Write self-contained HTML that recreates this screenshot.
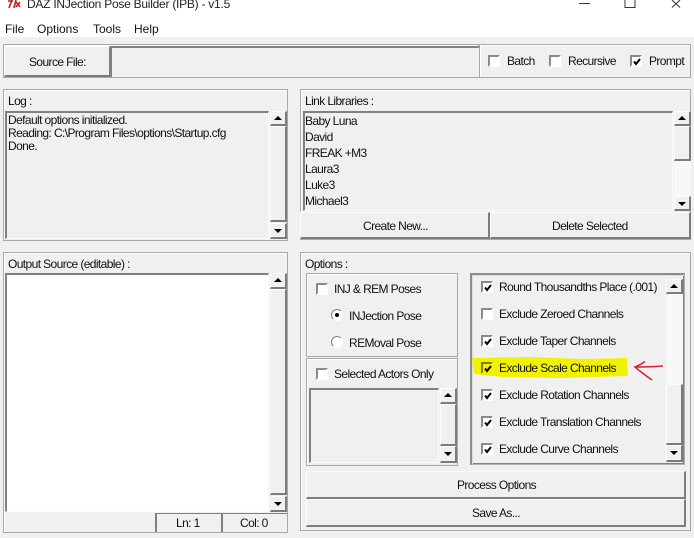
<!DOCTYPE html>
<html><head><meta charset="utf-8"><style>
html,body{margin:0;padding:0}
body{width:694px;height:538px;overflow:hidden;position:relative;background:#f0f0f0;font:12px "Liberation Sans",sans-serif;color:#111}
div,span,svg{position:absolute;box-sizing:border-box}
.t{white-space:nowrap;line-height:14px;height:14px;letter-spacing:-.6px}
.fr{border:1px solid #a8a8a8;background:#f0f0f0;box-shadow:inset 1px 1px 0 #fff}
.sk{border:1px solid #fbfbfb;border-top:2px solid #808080;border-left:2px solid #808080;background:#f0f0f0}
.rs{border-style:solid;border-width:1px 2px 2px 1px;border-color:#fcfcfc #7c7c7c #7c7c7c #fcfcfc;background:#f0f0f0;text-align:center}
.cb{width:12px;height:12px;background:#fff;border:2px solid #fff;border-top-color:#8a8a8a;border-left-color:#8a8a8a}
.cb svg{left:-1px;top:-1px}
.u:after,.d:after{content:"";position:absolute;left:3px;border:4px solid transparent}
.u:after{top:4px;border-top:0;border-bottom:4px solid #000}
.d:after{top:5px;border-bottom:0;border-top:4px solid #000}
.r{width:12px;height:12px;border-radius:50%;background:#fff;border:1px solid #fff;border-top-color:#808080;border-left-color:#808080}
</style></head><body>
<div style="left:0;top:0;width:694px;height:37px;background:#fff"></div>
<svg style="left:6px;top:0" width="16" height="9" viewBox="0 0 16 9"><path d="M2 1H7M6 0L3 8M10 0L8 8M10 2L14 7M14 2L10 7" stroke="#c02020" stroke-width="1.6" fill="none"/></svg>
<div class="t" style="left:27px;top:-3px;letter-spacing:-.25px;color:#222">DAZ INJection Pose Builder (IPB) - v1.5</div>
<svg style="left:570px;top:0" width="124" height="12"><path d="M9 3.5H20M55 0V7.5H65V0M102 0L110 7.5M110 0L102 7.5" stroke="#333" fill="none"/></svg>
<div class="t" style="left:5px;top:22px;letter-spacing:0">File</div>
<div class="t" style="left:37px;top:22px;letter-spacing:0">Options</div>
<div class="t" style="left:93px;top:22px;letter-spacing:0">Tools</div>
<div class="t" style="left:134px;top:22px;letter-spacing:0">Help</div>

<div class="fr" style="left:3px;top:44px;width:476px;height:34px"></div>
<div class="rs" style="left:4px;top:46px;width:107px;height:31px"><div class="t" style="left:24px;top:8px">Source File:</div></div>
<div class="sk" style="left:110px;top:46px;width:369px;height:31px;border-bottom:0;border-right:0"></div>
<div class="fr" style="left:479px;top:44px;width:212px;height:34px"></div>
<div class="cb" style="left:488px;top:55px"></div><div class="t" style="left:507px;top:54px">Batch</div>
<div class="cb" style="left:549px;top:55px"></div><div class="t" style="left:568px;top:54px">Recursive</div>
<div class="cb" style="left:630px;top:55px"><svg width="12" height="12"><path d="M3 5.5L5 8L9 3" stroke="#000" stroke-width="2" fill="none"/></svg></div><div class="t" style="left:649px;top:54px">Prompt</div>

<!-- Log -->
<div class="fr" style="left:3px;top:89px;width:285px;height:152px"></div>
<div class="t" style="left:8px;top:94px">Log :</div>
<div class="sk" style="left:5px;top:111px;width:264px;height:128px"></div>
<div class="t" style="left:8px;top:113px">Default options initialized.</div>
<div class="t" style="left:8px;top:126px">Reading: C:\Program Files\options\Startup.cfg</div>
<div class="t" style="left:8px;top:139px">Done.</div>
<div class="rs u" style="left:270px;top:111px;width:17px;height:15px"></div>
<div class="rs" style="left:270px;top:126px;width:17px;height:96px"></div>
<div class="rs d" style="left:270px;top:223px;width:17px;height:16px"></div>

<!-- Link libs -->
<div class="fr" style="left:300px;top:89px;width:391px;height:151px"></div>
<div class="t" style="left:305px;top:94px">Link Libraries :</div>
<div class="sk" style="left:303px;top:111px;width:370px;height:100px"></div>
<div class="t" style="left:305px;top:114px">Baby Luna</div>
<div class="t" style="left:305px;top:130px">David</div>
<div class="t" style="left:305px;top:146px">FREAK +M3</div>
<div class="t" style="left:305px;top:162px">Laura3</div>
<div class="t" style="left:305px;top:178px">Luke3</div>
<div class="t" style="left:305px;top:194px">Michael3</div>
<div class="rs u" style="left:674px;top:111px;width:17px;height:15px"></div>
<div class="rs" style="left:674px;top:126px;width:17px;height:35px"></div>
<div style="left:674px;top:161px;width:17px;height:35px;background:#f8f8f8"></div>
<div class="rs d" style="left:674px;top:196px;width:17px;height:15px"></div>
<div class="rs" style="left:300px;top:212px;width:190px;height:27px"><div class="t" style="left:62px;top:6px">Create New...</div></div>
<div class="rs" style="left:490px;top:212px;width:201px;height:27px"><div class="t" style="left:61px;top:6px">Delete Selected</div></div>

<!-- Output -->
<div class="fr" style="left:3px;top:252px;width:285px;height:281px"></div>
<div class="t" style="left:8px;top:257px">Output Source (editable) :</div>
<div class="sk" style="left:5px;top:273px;width:264px;height:239px;background:#fff"></div>
<div class="rs u" style="left:270px;top:273px;width:17px;height:16px"></div>
<div class="rs" style="left:270px;top:289px;width:17px;height:206px"></div>
<div class="rs d" style="left:270px;top:496px;width:17px;height:16px"></div>
<div class="sk" style="left:155px;top:513px;width:66px;height:19px;border-bottom:0;border-right:0;border-top-width:1px"></div>
<div class="t" style="left:176px;top:516px">Ln: 1</div>
<div class="sk" style="left:221px;top:513px;width:66px;height:19px;border-bottom:0;border-right:0;border-top-width:1px"></div>
<div class="t" style="left:240px;top:516px">Col: 0</div>

<!-- Options -->
<div class="fr" style="left:300px;top:252px;width:391px;height:279px"></div>
<div class="t" style="left:305px;top:257px">Options :</div>
<div class="fr" style="left:306px;top:273px;width:152px;height:84px"></div>
<div class="cb" style="left:316px;top:283px"></div><div class="t" style="left:334px;top:282px">INJ &amp; REM Poses</div>
<div class="r" style="left:331px;top:309px"></div><div style="left:335px;top:313px;width:4px;height:4px;border-radius:50%;background:#000"></div>
<div class="t" style="left:349px;top:309px">INJection Pose</div>
<div class="r" style="left:331px;top:336px"></div><div class="t" style="left:349px;top:336px">REMoval Pose</div>
<div class="fr" style="left:306px;top:358px;width:152px;height:108px"></div>
<div class="cb" style="left:316px;top:368px"></div><div class="t" style="left:334px;top:367px">Selected Actors Only</div>
<div class="sk" style="left:309px;top:388px;width:130px;height:75px"></div>
<div class="rs u" style="left:440px;top:388px;width:17px;height:16px"></div>
<div class="rs" style="left:440px;top:404px;width:17px;height:42px"></div>
<div class="rs d" style="left:440px;top:446px;width:17px;height:17px"></div>

<div style="left:470px;top:273px;width:215px;height:192px;border:2px solid #8c8c8c;border-right:1px solid #b0b0b0;border-bottom:1px solid #b0b0b0;box-shadow:inset 1px 1px 0 #ddd,inset -1px -1px 0 #808080;background:#f0f0f0"></div>
<svg style="left:472px;top:355px" width="156" height="25"><path d="M0 3L60 2L110 4L155 3L156 21L90 23L30 22L2 19Z" fill="#f2f200"/></svg>
<div style="left:666px;top:279px;width:17px;height:105px;background:#f8f8f8"></div>
<div class="rs u" style="left:666px;top:279px;width:17px;height:15px"></div>
<div class="rs" style="left:666px;top:384px;width:17px;height:61px"></div>
<div class="rs d" style="left:666px;top:445px;width:17px;height:17px"></div>

<div class="cb" style="left:481px;top:281px"><svg width="12" height="12"><path d="M3 5.5L5 8L9 3" stroke="#000" stroke-width="2" fill="none"/></svg></div><div class="t" style="left:499px;top:280px">Round Thousandths Place (.001)</div>
<div class="cb" style="left:481px;top:308px"></div><div class="t" style="left:499px;top:307px">Exclude Zeroed Channels</div>
<div class="cb" style="left:481px;top:335px"><svg width="12" height="12"><path d="M3 5.5L5 8L9 3" stroke="#000" stroke-width="2" fill="none"/></svg></div><div class="t" style="left:499px;top:334px">Exclude Taper Channels</div>
<div class="cb" style="left:481px;top:362px;background:#f2f200;border-color:#808000 #f2f200 #f2f200 #808000"><svg width="12" height="12"><path d="M3 5.5L5 8L9 3" stroke="#000" stroke-width="2" fill="none"/></svg></div><div class="t" style="left:499px;top:361px">Exclude Scale Channels</div>
<div class="cb" style="left:481px;top:389px"><svg width="12" height="12"><path d="M3 5.5L5 8L9 3" stroke="#000" stroke-width="2" fill="none"/></svg></div><div class="t" style="left:499px;top:388px">Exclude Rotation Channels</div>
<div class="cb" style="left:481px;top:416px"><svg width="12" height="12"><path d="M3 5.5L5 8L9 3" stroke="#000" stroke-width="2" fill="none"/></svg></div><div class="t" style="left:499px;top:415px">Exclude Translation Channels</div>
<div class="cb" style="left:481px;top:443px"><svg width="12" height="12"><path d="M3 5.5L5 8L9 3" stroke="#000" stroke-width="2" fill="none"/></svg></div><div class="t" style="left:499px;top:442px">Exclude Curve Channels</div>
<svg style="left:632px;top:358px" width="34" height="24"><path d="M13 3.5Q8 7 3 9Q10 15 20 22M3 9Q16 9 31 8" stroke="#d82030" stroke-width="1.5" fill="none"/></svg>

<div class="rs" style="left:306px;top:471px;width:380px;height:28px"><div class="t" style="left:150px;top:6px">Process Options</div></div>
<div class="rs" style="left:306px;top:499px;width:380px;height:28px"><div class="t" style="left:165px;top:6px">Save As...</div></div>
</body></html>
